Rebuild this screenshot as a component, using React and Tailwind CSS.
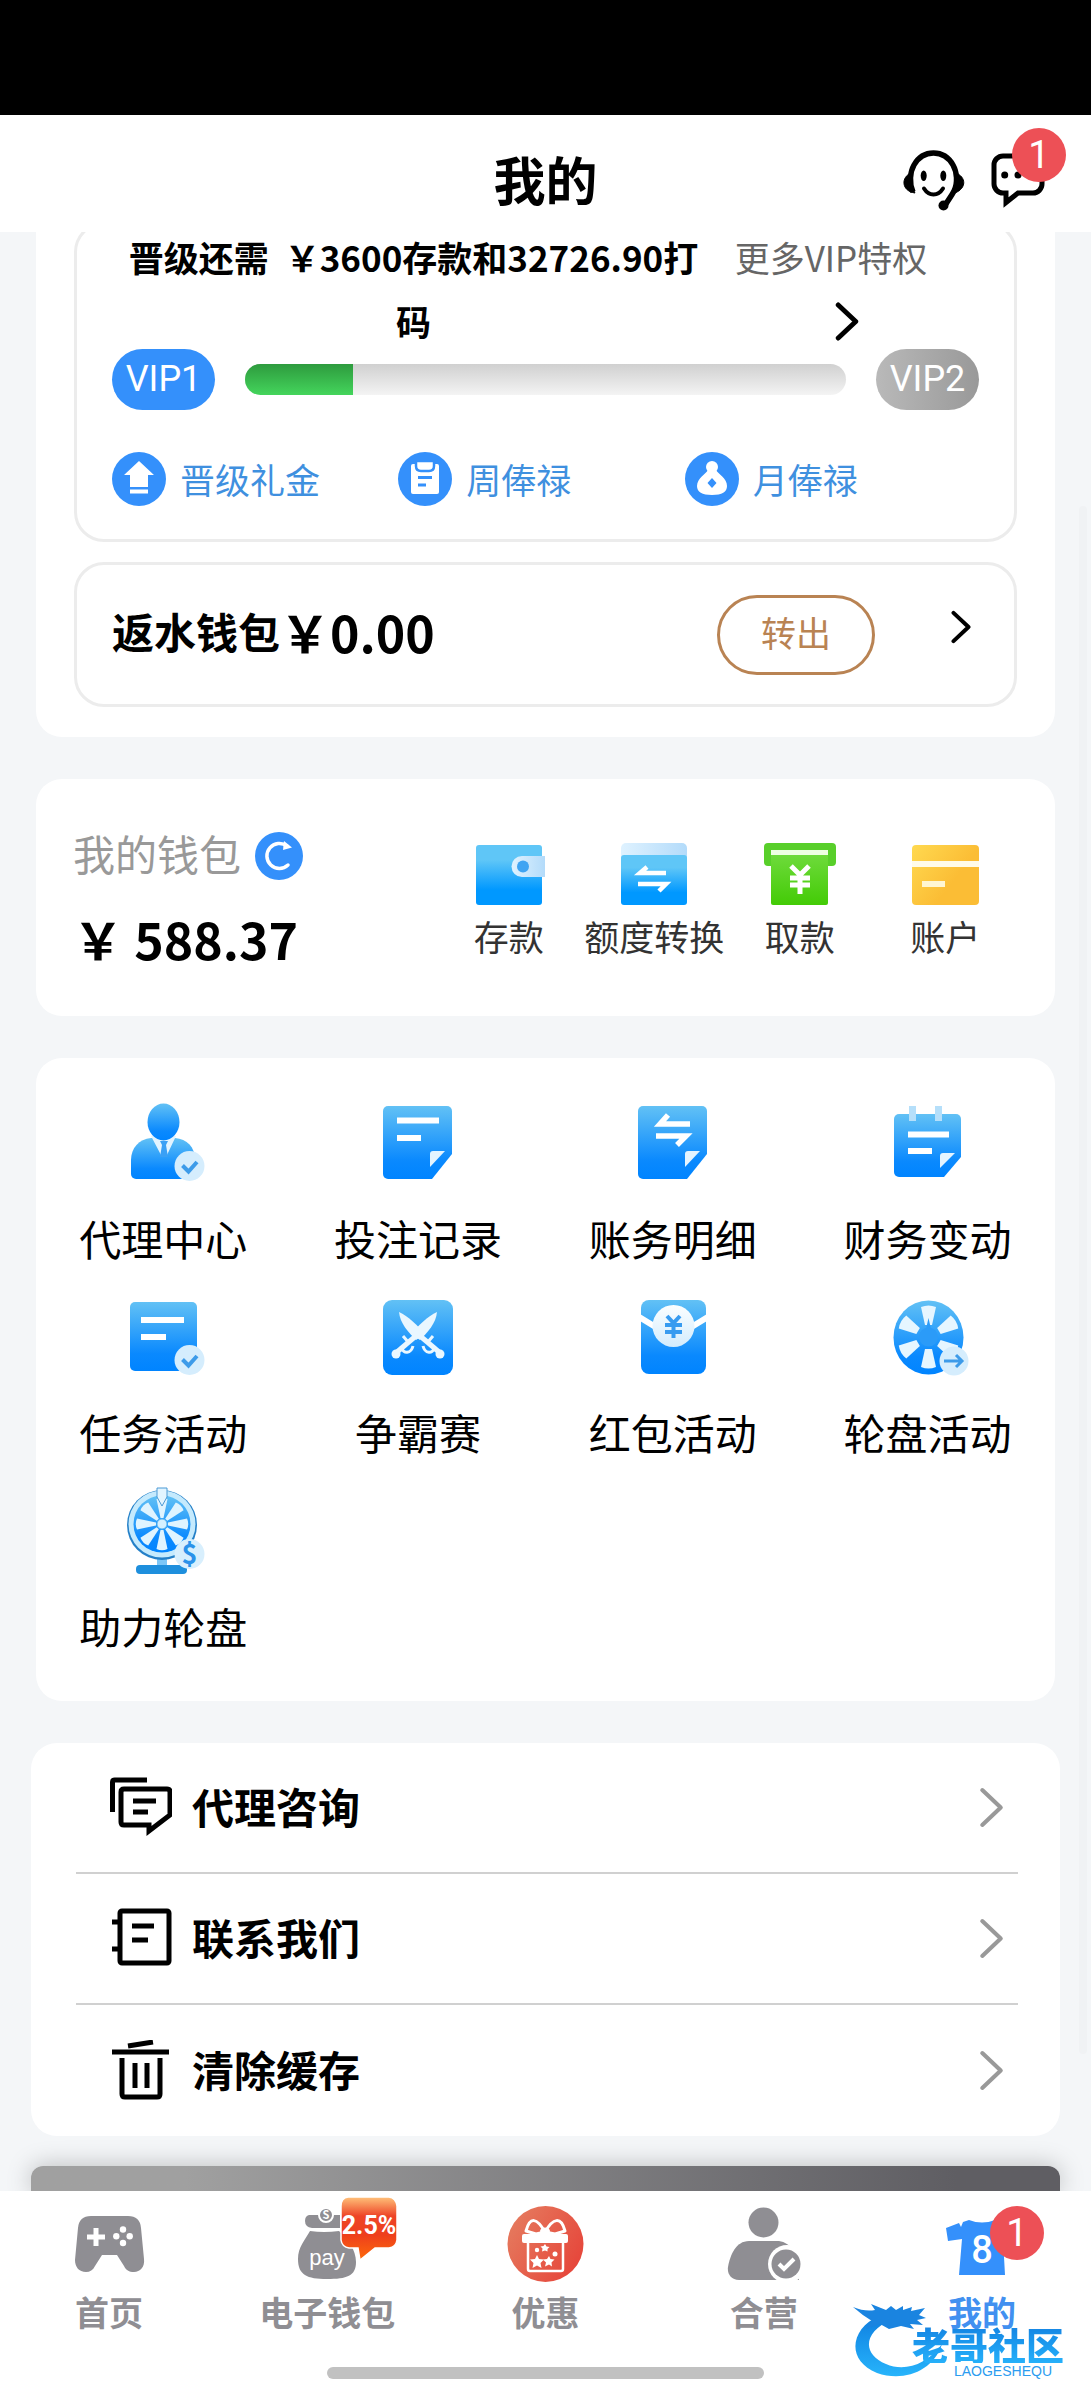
import React from 'react';

const FONT = 'font-["Noto_Sans_CJK_SC",sans-serif]';

// Shared gradients, referenced by id from every icon below
function Gradients() {
  return (
    <svg className="absolute h-0 w-0" aria-hidden="true">
      <defs>
        <linearGradient id="blue" x1="0" y1="0" x2="0" y2="1">
          <stop offset="0" stopColor="#62c1f5" />
          <stop offset="0.75" stopColor="#0a89fe" />
          <stop offset="1" stopColor="#0084ff" />
        </linearGradient>
        <linearGradient id="wallet" x1="0" y1="0" x2="0" y2="1">
          <stop offset="0.25" stopColor="#5fc6f7" />
          <stop offset="0.75" stopColor="#0098ff" />
        </linearGradient>
        <linearGradient id="pale" x1="0" y1="0" x2="1" y2="0">
          <stop offset="0" stopColor="#dff2ff" />
          <stop offset="1" stopColor="#b3dbfa" />
        </linearGradient>
        <linearGradient id="ice" x1="0" y1="0" x2="0" y2="1">
          <stop offset="0" stopColor="#fbfeff" />
          <stop offset="1" stopColor="#d3ecfd" />
        </linearGradient>
        <linearGradient id="green" x1="0" y1="0" x2="0" y2="1">
          <stop offset="0" stopColor="#72dc40" />
          <stop offset="1" stopColor="#43cb06" />
        </linearGradient>
        <linearGradient id="gold" x1="0" y1="0" x2="1" y2="0.7">
          <stop offset="0" stopColor="#ffd950" />
          <stop offset="0.7" stopColor="#fbbd35" />
        </linearGradient>
        <linearGradient id="coral" x1="0" y1="0" x2="1" y2="0.6">
          <stop offset="0" stopColor="#e58062" />
          <stop offset="1" stopColor="#e6483c" />
        </linearGradient>
        <linearGradient id="orange" x1="0" y1="0" x2="0" y2="1">
          <stop offset="0" stopColor="#ffc27a" />
          <stop offset="0.3" stopColor="#ee4527" />
          <stop offset="0.6" stopColor="#ee3f1c" />
          <stop offset="1" stopColor="#fd6a0a" />
        </linearGradient>
        <linearGradient id="brand" x1="0" y1="0" x2="0" y2="1">
          <stop offset="0" stopColor="#0f7fe0" />
          <stop offset="1" stopColor="#27b4fb" />
        </linearGradient>
      </defs>
    </svg>
  );
}

function Chevron({ className, strokeWidth = 2 }) {
  return (
    <svg className={className} viewBox="0 0 12 20" fill="none" stroke="currentColor" strokeWidth={strokeWidth} strokeLinecap="round" strokeLinejoin="round" aria-hidden="true">
      <path d="M1.5 1.5 10.5 10 1.5 18.5" />
    </svg>
  );
}

function HeadsetIcon() {
  return (
    <svg className="size-[62px]" viewBox="0 0 62 62" fill="none" stroke="#000" aria-hidden="true">
      <path d="M10 42C6 33 7 22 11 15 20-1 41-1 50 15c4 7 5 18 1 26-3 6-6 9-8 13" strokeWidth="5.5" />
      <path d="M8 23C-2 27-2 41 12 43 8 36 7 29 8 23ZM53 23c10 4 11 15-1 20 1-6 2-13 1-20Z" fill="#000" strokeWidth="1" />
      <circle cx="40.500" cy="55.500" r="5" fill="#000" stroke="none" />
      <ellipse cx="20.700" cy="25.700" rx="3" ry="5.200" fill="#000" stroke="none" />
      <ellipse cx="40.300" cy="25.700" rx="3" ry="5.200" fill="#000" stroke="none" />
      <path d="M21 38.500c5 8 14 8 19 0" strokeWidth="4" strokeLinecap="round" />
    </svg>
  );
}

function MessageIcon() {
  return (
    <svg className="h-[56px] w-[54px]" viewBox="0 0 54 56" aria-hidden="true">
      <path d="M12 3h30a9 9 0 0 1 9 9v19a9 9 0 0 1-9 9H27L15 49.500V40h-3a9 9 0 0 1-9-9V12a9 9 0 0 1 9-9Z" fill="none" stroke="#000" strokeWidth="5" />
      <circle cx="13.700" cy="22" r="3.500" />
      <circle cx="27" cy="22" r="3.500" />
      <circle cx="40" cy="22" r="3.500" />
    </svg>
  );
}

function Badge({ className }) {
  return (
    <span className={`absolute flex size-[54px] items-center justify-center rounded-full bg-[#ed5056] font-["Roboto",sans-serif] text-[38px] leading-none font-normal text-white ${className}`}>1</span>
  );
}

/* ---------- VIP gifts ---------- */

function GiftUpIcon() {
  return (
    <svg className="size-[54px]" viewBox="0 0 54 54" aria-hidden="true">
      <circle cx="27" cy="27" r="27" fill="#3490fb" />
      <path d="M27 9 42 23H36V35H18V23H12ZM18 37.500H36V41.500H18Z" fill="#fff" />
    </svg>
  );
}

function ClipboardIcon() {
  return (
    <svg className="size-[54px]" viewBox="0 0 54 54" aria-hidden="true">
      <circle cx="27" cy="27" r="27" fill="#3490fb" />
      <path d="M15 12h24a2 2 0 0 1 2 2v26a2 2 0 0 1-2 2H15a2 2 0 0 1-2-2V14a2 2 0 0 1 2-2Z" fill="#fff" />
      <path d="M18 9h18v5q0 5-5 5h-8q-5 0-5-5Z" fill="#fff" stroke="#3490fb" strokeWidth="2.500" />
      <path d="M20 25.500H34M20 33H28" stroke="#3490fb" strokeWidth="3" />
    </svg>
  );
}

function MoneyBagIcon() {
  return (
    <svg className="size-[54px]" viewBox="0 0 54 54" aria-hidden="true">
      <circle cx="27" cy="27" r="27" fill="#3490fb" />
      <circle cx="27" cy="15" r="6" fill="#fff" />
      <path d="M23 18h8c2 4 11 8 11 16 0 6-5 9-15 9s-15-3-15-9c0-8 9-12 11-16Z" fill="#fff" />
      <path d="m27 26 4.500 5-4.500 5-4.500-5Z" fill="#3490fb" />
    </svg>
  );
}

/* ---------- Wallet ---------- */

function DepositIcon() {
  return (
    <svg className="h-16 w-[72px]" viewBox="0 0 72 64" aria-hidden="true">
      <rect x="3" y="3" width="66" height="60" rx="3" fill="url(#wallet)" />
      <path d="M72 14H49a10.500 10.500 0 0 0 0 21h23Z" fill="url(#pale)" />
      <circle cx="50" cy="24.500" r="6" fill="#3fa4f2" />
    </svg>
  );
}

function ExchangeIcon() {
  return (
    <svg className="h-16 w-[72px]" viewBox="0 0 72 64" aria-hidden="true">
      <rect x="3" y="1" width="66" height="30" rx="5" fill="url(#pale)" />
      <rect x="3" y="13" width="66" height="50" rx="3" fill="url(#wallet)" />
      <path d="M48 31H22L29 25M20 42H48L41 49" fill="none" stroke="#fff" strokeWidth="4.500" />
    </svg>
  );
}

function WithdrawIcon() {
  return (
    <svg className="h-16 w-[72px]" viewBox="0 0 72 64" aria-hidden="true">
      <rect x="0" y="1" width="72" height="23" rx="4" fill="#58cf2a" />
      <rect x="7" y="8" width="57" height="55" rx="2" fill="url(#green)" />
      <rect x="7" y="8" width="57" height="5" fill="#eeffe2" />
      <path d="M27 24 36 33 45 24M26 36H46M26 43H46M36 33V52" fill="none" stroke="#fff" strokeWidth="5" />
    </svg>
  );
}

function AccountIcon() {
  return (
    <svg className="h-16 w-[72px]" viewBox="0 0 72 64" aria-hidden="true">
      <rect x="3" y="3" width="67" height="60" rx="4" fill="url(#gold)" />
      <rect x="3" y="19" width="67" height="6" fill="#fffbe9" />
      <rect x="13" y="39" width="23" height="6" fill="#fff6d2" />
    </svg>
  );
}

/* ---------- Menu ---------- */

function CheckDot() {
  return (
    <g>
      <circle cx="71.500" cy="68" r="15" fill="#d5edfd" />
      <path d="m64.500 67.500 6 6L79 64" fill="none" stroke="#3d9be9" strokeWidth="4" />
    </g>
  );
}

function MenuSvg({ children }) {
  return (
    <svg className="size-[90px]" viewBox="0 0 90 90" aria-hidden="true">
      {children}
    </svg>
  );
}

function AgentIcon() {
  return (
    <MenuSvg>
      <path d="M33 40h24c12 1 20 9 20 22v19H18a5 5 0 0 1-5-5V62c0-12 8-21 20-22Z" fill="url(#blue)" />
      <path d="M33 38 43 57 46 47 49 57 58 38Z" fill="#e3f4ff" />
      <path d="M42 43h8l-2 4 2 12h-8l2-12Z" fill="#3aa0f5" />
      <ellipse cx="45.500" cy="24" rx="16" ry="18.500" fill="url(#blue)" />
      <CheckDot />
    </MenuSvg>
  );
}

function Sheet() {
  return (
    <g>
      <path d="M15 8h59a5 5 0 0 1 5 5V56L59 81H15a5 5 0 0 1-5-5V13a5 5 0 0 1 5-5Z" fill="url(#blue)" />
      <path d="M57 56q0-3 3-3H72L57 69Z" fill="#e4f4ff" />
    </g>
  );
}

function RecordIcon() {
  return (
    <MenuSvg>
      <Sheet />
      <path d="M24 22.500H66M24 40H48" stroke="#fff" strokeWidth="6" />
    </MenuSvg>
  );
}

function LedgerIcon() {
  return (
    <MenuSvg>
      <Sheet />
      <path d="M62 26H32L40 17M28 38H58L49 47" fill="none" stroke="#fff" strokeWidth="5.500" />
    </MenuSvg>
  );
}

function CalendarIcon() {
  return (
    <MenuSvg>
      <path d="M16 16h57a5 5 0 0 1 5 5V59L61 79H16a5 5 0 0 1-5-5V21a5 5 0 0 1 5-5Z" fill="url(#blue)" />
      <path d="M26 8h7v15h-7ZM52 8h7v15h-7Z" fill="#b5dffa" />
      <path d="M25 36.500H66M25 53H49" stroke="#fff" strokeWidth="6" />
      <path d="M57 58q0-3 3-3H72L57 70Z" fill="#e4f4ff" />
    </MenuSvg>
  );
}

function TaskIcon() {
  return (
    <MenuSvg>
      <rect x="12" y="10" width="67" height="69" rx="5" fill="url(#blue)" />
      <path d="M23 28H66M23 45H48" stroke="#fff" strokeWidth="6" />
      <CheckDot />
    </MenuSvg>
  );
}

function Sabre() {
  return (
    <g>
      <path d="M26 20c9 4 19 14 26 22L43 48C35 40 27 31 26 20Z" fill="#eaf7ff" />
      <path d="M46 43 66 60" stroke="#eaf7ff" strokeWidth="5" />
      <path d="M50 54C52 62 60 62 61 56M54 51l6-7" fill="none" stroke="#eaf7ff" strokeWidth="3" />
      <circle cx="67" cy="62" r="4.500" fill="#eaf7ff" />
    </g>
  );
}

function BattleIcon() {
  return (
    <MenuSvg>
      <rect x="10" y="8" width="70" height="75" rx="9" fill="url(#blue)" />
      <Sabre />
      <g transform="matrix(-1 0 0 1 90 0)">
        <Sabre />
      </g>
    </MenuSvg>
  );
}

function RedPacketIcon() {
  return (
    <MenuSvg>
      <rect x="13" y="8" width="65" height="74" rx="8" fill="url(#blue)" />
      <path d="M12 22 30 33v7L12 29ZM79 22 61 33v7L79 29Z" fill="#fff" />
      <circle cx="45.500" cy="34" r="21" fill="url(#ice)" />
      <path d="m39 24 6.500 7 6.500-7M37 33H54M37 40H54M45.500 31V46" fill="none" stroke="#379bf0" strokeWidth="4" />
    </MenuSvg>
  );
}

function WheelIcon() {
  return (
    <MenuSvg>
      <ellipse cx="45.500" cy="45.500" rx="35" ry="37" fill="url(#blue)" />
      {[0, 60, 120, 180, 240, 300].map((deg) => (
        <path key={deg} d="M38 15Q45.500 12 53 15L49 33H42Z" fill="#e6f6ff" transform={`rotate(${deg} 45.5 45)`} />
      ))}
      <circle cx="45.500" cy="45" r="9.500" fill="#2b9bf8" />
      <path d="M43 37 45.500 26 48 37Z" fill="#2b9bf8" />
      <circle cx="71" cy="69" r="14.500" fill="#d5edfd" />
      <path d="M61 69H78M73 63l6 6-6 6" fill="none" stroke="#3d9be9" strokeWidth="3" />
    </MenuSvg>
  );
}

function BoostWheelIcon() {
  return (
    <MenuSvg>
      <rect x="39" y="68" width="10" height="14" fill="#7cc6f7" />
      <rect x="18" y="79" width="51" height="9" rx="4" fill="#1e8fdd" />
      <circle cx="44" cy="39" r="35" fill="#2480c8" />
      <circle cx="44" cy="38" r="33.500" fill="#c5eafd" />
      <circle cx="44" cy="38" r="28.500" fill="url(#blue)" />
      {[0, 45, 90, 135, 180, 225, 270, 315].map((deg) => (
        <path key={deg} d="M38.500 13Q44 10.500 49.500 13L45.500 32H42.500Z" fill="#dff4ff" transform={`rotate(${deg} 44 38)`} />
      ))}
      <circle cx="44" cy="38" r="5" fill="#d5f0ff" stroke="#5bb5f0" />
      <path d="M39 2h10v9l-5 9-5-9Z" fill="#e2f5ff" stroke="#4a9ad6" />
      <circle cx="71.500" cy="68" r="15" fill="#d8effd" />
      <text x="71.500" y="78" textAnchor="middle" fontSize="27" fontWeight="700" fill="#2a92ea">$</text>
    </MenuSvg>
  );
}

/* ---------- Service list ---------- */

function LineSvg({ children }) {
  return (
    <svg className="size-[62px]" viewBox="0 0 62 62" fill="none" stroke="#000" strokeWidth="5" aria-hidden="true">
      {children}
    </svg>
  );
}

function ConsultIcon() {
  return (
    <LineSvg>
      <path d="M2.500 35V5q0-2 2-2H37" />
      <path d="M14 12H57q3 0 3 3V38L39 54V48H14q-3 0-3-3V15q0-3 3-3Z" />
      <path d="M23 24H46M23 35H38" />
    </LineSvg>
  );
}

function ContactIcon() {
  return (
    <LineSvg>
      <rect x="10" y="3" width="49" height="52" rx="2" />
      <path d="M2 14H10M2 41H10M22 18H44M22 32H38" />
    </LineSvg>
  );
}

function TrashIcon() {
  return (
    <LineSvg>
      <path d="M2 12H59M18 6 43 2M12 18V54q0 3 3 3H47q3 0 3-3V18M25 23V48M37 23V48" />
    </LineSvg>
  );
}

/* ---------- Tab bar ---------- */

function TabSvg({ children }) {
  return (
    <svg className="h-[76px] w-[90px] overflow-visible" viewBox="0 0 90 76" aria-hidden="true">
      {children}
    </svg>
  );
}

function GamepadIcon() {
  return (
    <TabSvg>
      <path d="M27 10H64q12 0 13 12L80 53c1 8-4 13-10 13-5 0-8-2-10-6l-7-11H38L31 60c-2 4-5 6-9 6-7 0-11-5-11-12L14 22Q15 10 27 10Z" fill="#8f8e93" />
      <path d="M32 22V40M23 31H41" stroke="#fff" strokeWidth="5" />
      <g fill="#fff">
        <circle cx="59" cy="23.500" r="3.200" />
        <circle cx="59" cy="37" r="3.200" />
        <circle cx="52.300" cy="30.300" r="3.200" />
        <circle cx="65.700" cy="30.300" r="3.200" />
      </g>
    </TabSvg>
  );
}

function PayIcon() {
  return (
    <TabSvg>
      <path d="M27 9H58V22H30q-7-1-7-7 0-5 4-6Z" fill="#8f8e93" />
      <circle cx="44" cy="9" r="7" fill="#8f8e93" stroke="#fff" strokeWidth="2" />
      <text x="44" y="13" textAnchor="middle" fontSize="11" fill="#fff">S</text>
      <path d="M28 25Q42 27 57 25C66 33 74 44 74 56c0 14-9 17-29 17S16 69 16 53c0-12 7-19 12-28Z" fill="#8f8e93" />
      <text x="45" y="59" textAnchor="middle" fontSize="22" fontWeight="400" fill="#fff" fontFamily="Liberation Sans">pay</text>
      <path d="M66 -9H107Q114 -8 115 0V34q-1 7-8 8H93L78 54 76 42H67q-7-1-8-8V0q0-8 7-9Z" fill="url(#orange)" stroke="#fff" strokeWidth="1.500" />
      <text x="87" y="28" textAnchor="middle" fontSize="25" fontWeight="700" fill="#fff" fontFamily="Roboto">2.5%</text>
    </TabSvg>
  );
}

function PromoIcon() {
  return (
    <TabSvg>
      <circle cx="45.500" cy="38" r="38" fill="url(#coral)" />
      <path d="M45 26C37 12 30 10 26 25l10 3ZM45 26c8-14 16-16 20-1l-10 3Z" fill="none" stroke="#fff" strokeWidth="3" strokeLinejoin="round" />
      <rect x="22" y="28" width="46" height="9" rx="2" fill="#fff" />
      <ellipse cx="45" cy="25" rx="5" ry="3.500" fill="#fff" />
      <path d="M28 37V63q0 2 2 2H61q2 0 2-2V37" fill="none" stroke="#fff" strokeWidth="2.500" />
      <path d="m37 49 2 4 5 .5-3.500 3.500 1 5L37 59.500 32.500 62l1-5L30 53.500l5-.5ZM49 50l1.500 3 4 .5-3 3 .5 4-3-2-4 2 1-4-3-3 4-.5Z" fill="#fff" />
      <path d="m45 38 1.500 2.500 3 .5-2 2v2.500L45 44.500l-3 1 .5-3-2-2 3-.5Z" fill="#fff" />
      <circle cx="37" cy="44" r="2.200" fill="#fff" />
      <circle cx="55" cy="48" r="2.500" fill="#fff" />
    </TabSvg>
  );
}

function PartnerIcon() {
  return (
    <TabSvg>
      <circle cx="44.500" cy="16.500" r="15" fill="#8f8e93" />
      <path d="M30 35H60c12 2 18 12 20 24v15H20C12 74 8 68 9 61 11 49 17 35 30 35Z" fill="#8f8e93" />
      <circle cx="68" cy="58" r="19" fill="#fff" />
      <circle cx="67" cy="58" r="14.500" fill="#8f8e93" />
      <path d="m60 58 5 5 10-10" fill="none" stroke="#fff" strokeWidth="4" />
    </TabSvg>
  );
}

function ShirtIcon() {
  return (
    <TabSvg>
      <path d="M32 14q13 5 26 0L79 22V34L66 33 68 69H22L25 33 11 35 9 22 22 17l2 4 2-5Z" fill="#3490fb" />
      <text x="45" y="57" textAnchor="middle" fontSize="38" fontWeight="500" fill="#fff" fontFamily="Roboto">8</text>
    </TabSvg>
  );
}

function Watermark() {
  return (
    <div className="pointer-events-none absolute top-[111px] right-[17px] h-[76px] w-[221px]">
      <svg className="absolute inset-0 h-full w-full" viewBox="0 0 221 76" aria-hidden="true">
        <path d="M26 14C-2 26-8 58 24 71c26 9 56-1 65-29-15 21-38 28-56 20C9 52 10 30 38 18Z" fill="url(#brand)" />
        <path d="M0 5q12 5 22 3L18 2l15 6 5-4 5 4 7-4v4l9-3-1 4 14-3-6 7 7 3-9 2 6 5-13-1 4 5-13-3-12 3-9-5-14 5q2-6 6-8Q9 13 0 5Z" fill="#1a84e0" />
      </svg>
      <div className="absolute top-[23px] right-[10px] bg-gradient-to-b from-[#1583e2] to-[#25b0fa] bg-clip-text text-[38px] leading-[38px] font-black text-transparent">老哥社区</div>
      <div className='absolute top-[62px] right-[22px] font-["Liberation_Sans",sans-serif] text-[14px] leading-[14px] text-[#2b9cf0]'>LAOGESHEQU</div>
    </div>
  );
}

const gifts = [
  { label: '晋级礼金', Icon: GiftUpIcon },
  { label: '周俸禄', Icon: ClipboardIcon },
  { label: '月俸禄', Icon: MoneyBagIcon },
];

const walletActions = [
  { label: '存款', Icon: DepositIcon },
  { label: '额度转换', Icon: ExchangeIcon },
  { label: '取款', Icon: WithdrawIcon },
  { label: '账户', Icon: AccountIcon },
];

const menuItems = [
  { label: '代理中心', Icon: AgentIcon },
  { label: '投注记录', Icon: RecordIcon },
  { label: '账务明细', Icon: LedgerIcon },
  { label: '财务变动', Icon: CalendarIcon },
  { label: '任务活动', Icon: TaskIcon },
  { label: '争霸赛', Icon: BattleIcon },
  { label: '红包活动', Icon: RedPacketIcon },
  { label: '轮盘活动', Icon: WheelIcon },
  { label: '助力轮盘', Icon: BoostWheelIcon },
];

const services = [
  { label: '代理咨询', Icon: ConsultIcon },
  { label: '联系我们', Icon: ContactIcon },
  { label: '清除缓存', Icon: TrashIcon },
];

const tabs = [
  { label: '首页', Icon: GamepadIcon },
  { label: '电子钱包', Icon: PayIcon },
  { label: '优惠', Icon: PromoIcon },
  { label: '合营', Icon: PartnerIcon },
  { label: '我的', Icon: ShirtIcon, active: true },
];

function Header() {
  return (
    <header className="relative z-10 grid h-[117px] grid-cols-3 items-center bg-white pt-3.5">
      <h1 className="col-start-2 pb-1 text-center text-[52px] leading-[64px] font-bold">我的</h1>
      <div className="flex items-center justify-end gap-[26px] pr-[46px]">
        <button type="button" aria-label="客服"><HeadsetIcon /></button>
        <button type="button" aria-label="消息" className="relative">
          <MessageIcon />
          <Badge className="-top-[25px] left-[21px]" />
        </button>
      </div>
    </header>
  );
}

function VipPanel() {
  return (
    <section className="mx-9 -mt-2.5 rounded-b-[26px] bg-white px-[38px] pb-[30px]">
      <div className="rounded-[30px] border-[3px] border-[#ececec] px-[35px] pb-[33px]">
        <div className="flex text-[35px] leading-[64px]">
          <p className="flex-1 px-2 text-center font-bold">晋级还需&nbsp;&nbsp;{'\uFFE5'}3600存款和32726.90打码</p>
          <a href="#vip" className="flex w-[264px] flex-col items-center text-[#666]">
            <span className="pr-8 whitespace-nowrap">更多VIP特权</span>
            <span className="flex h-16 items-center text-black">
              <Chevron className="h-[39px] w-[24px]" strokeWidth={2.5} />
            </span>
          </a>
        </div>
        <div className="mt-0.5 flex h-12 items-center gap-[30px]">
          <span className='flex h-[61px] w-[103px] shrink-0 items-center justify-center rounded-full bg-[#3490fb] font-["Roboto",sans-serif] text-[36px] text-white'>VIP1</span>
          <div className="h-[31px] flex-1 overflow-hidden rounded-full bg-gradient-to-b from-[#d0d0d0] to-[#f4f4f4]">
            <div className="h-full w-[18%] bg-gradient-to-b from-[#2e9b3e] to-[#44d55c]" />
          </div>
          <span className='flex h-[61px] w-[103px] shrink-0 items-center justify-center rounded-full bg-gradient-to-r from-[#b9b9b9] to-[#999] font-["Roboto",sans-serif] text-[36px] text-white'>VIP2</span>
        </div>
        <div className="mt-[49px] grid grid-cols-3 pr-2">
          {gifts.map(({ label, Icon }) => (
            <button key={label} type="button" className="flex items-center gap-3.5 text-[35px] leading-[54px] text-[#3f90df]">
              <Icon />
              {label}
            </button>
          ))}
        </div>
      </div>

      <div className="mt-5 flex h-[145px] items-center rounded-[30px] border-[3px] border-[#ececec] px-[35px]">
        <span className="pb-2 text-[42px] font-bold">返水钱包</span>
        <span className="pb-2 text-[50px] leading-[60px] font-bold">{'\uFFE5'}0.00</span>
        <button type="button" className="ml-auto h-[80px] w-[158px] rounded-full border-[3px] border-[#b98353] pb-1 text-[35px] text-[#b98353]">转出</button>
        <button type="button" aria-label="返水钱包详情" className="mr-2 mb-4 ml-[76px]">
          <Chevron className="h-[34px] w-[20px]" strokeWidth={2.4} />
        </button>
      </div>
    </section>
  );
}

function WalletPanel() {
  return (
    <section className="mx-9 mt-[42px] flex justify-between rounded-[26px] bg-white px-[37px] pb-12">
      <div className="pt-[53px]">
        <div className="flex h-12 items-center gap-3.5">
          <h2 className="pb-2 text-[42px] text-[#999]">我的钱包</h2>
          <button type="button" aria-label="刷新">
            <svg className="size-12" viewBox="0 0 48 48" fill="none" aria-hidden="true">
              <circle cx="24" cy="24" r="24" fill="#3490fb" />
              <path d="M33 33A12.500 12.500 0 1 1 32 14" stroke="#fff" strokeWidth="3.500" strokeLinecap="round" />
              <path d="M29 9 37 15.500 28 18Z" fill="#fff" />
            </svg>
          </button>
        </div>
        <p className="mt-7 text-[50px] leading-[60px] font-bold">{'\uFFE5'} 588.37</p>
      </div>
      <div className="grid w-[61.6%] grid-cols-4 pt-[63px]">
        {walletActions.map(({ label, Icon }) => (
          <button key={label} type="button" className="flex flex-col items-center gap-2 text-[35px] leading-[44px] whitespace-nowrap text-[#333]">
            <Icon />
            {label}
          </button>
        ))}
      </div>
    </section>
  );
}

function MenuPanel() {
  return (
    <section className="mx-9 mt-[42px] grid grid-cols-4 rounded-[26px] bg-white pt-10 pb-[21px]">
      {menuItems.map(({ label, Icon }) => (
        <button key={label} type="button" className="flex flex-col items-center gap-[18px] pb-[22px] text-[42px] leading-[64px]">
          <Icon />
          {label}
        </button>
      ))}
    </section>
  );
}

function ServiceList() {
  return (
    <section className="mx-[31px] mt-[42px] rounded-[26px] bg-white pr-[42px] pl-[45px]">
      {services.map(({ label, Icon }) => (
        <button key={label} type="button" className="flex h-[131px] w-full items-center border-b-2 border-[#d0d0d0] pr-3.5 pl-[34px] text-[42px] font-bold last:border-b-0">
          <Icon />
          <span className="ml-5 pb-1">{label}</span>
          <Chevron className="ml-auto h-[41px] w-[25px] text-[#999]" strokeWidth={2} />
        </button>
      ))}
    </section>
  );
}

function TabBar() {
  return (
    <nav className="relative z-10 bg-white pt-[15px] pb-[21px]">
      <div className="grid grid-cols-5">
        {tabs.map(({ label, Icon, active }) => (
          <a key={label} href="#tab" className={`flex flex-col items-center gap-2 pb-px text-[34px] leading-[44px] font-bold ${active ? 'text-[#4190f0]' : 'text-[#8f8e93]'}`}>
            <span className="relative">
              <Icon />
              {active && <Badge className="top-0 left-[53px]" />}
            </span>
            {label}
          </a>
        ))}
      </div>
      <div className="mx-auto mt-8 h-3 w-2/5 rounded-full bg-[#c1c1c1]" />
      <Watermark />
    </nav>
  );
}

function App() {
  return (
    <div className={`flex min-h-screen flex-col bg-[#f4f6f8] text-black ${FONT}`}>
      <Gradients />
      <div className="h-[115px] bg-black" />
      <Header />
      <main className="relative flex-1 overflow-hidden">
        <VipPanel />
        <WalletPanel />
        <MenuPanel />
        <ServiceList />
        <div className="mx-[31px] mt-[30px] h-[25px] rounded-t-[12px] bg-gradient-to-r from-[#a0a0a0] from-15% to-[#5f5e63] to-90% shadow-[0_0_24px_rgba(0,0,0,0.25)]" />
        {/* scroll thumb */}
        <div className="absolute top-[14%] right-1 h-[79%] w-2 rounded-full bg-[#f0f2f4]" />
      </main>
      <TabBar />
    </div>
  );
}

export default App;
